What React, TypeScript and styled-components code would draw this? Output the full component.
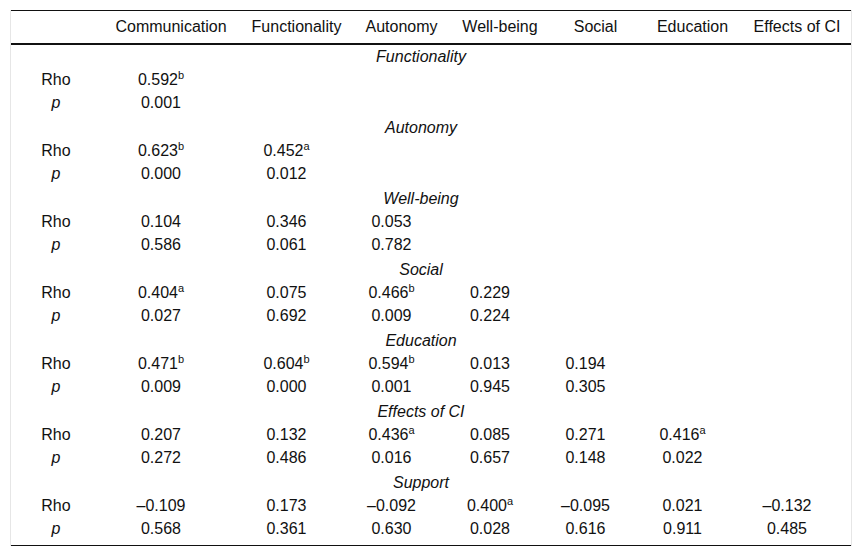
import React from "react";
import styled, { createGlobalStyle } from "styled-components";

const GlobalStyle = createGlobalStyle`
  html, body {
    margin: 0;
    padding: 0;
    background: #fff;
  }
  body {
    font-family: "Liberation Sans", Arial, Helvetica, sans-serif;
    color: #111;
  }
`;

const Wrapper = styled.div`
  margin: 10px 0 0 10px;
  width: 840px;
  border-left: 1px solid #e6e6e6;
  border-right: 1px solid #e6e6e6;
`;

const Table = styled.table`
  width: 840px;
  border-collapse: collapse;
  table-layout: fixed;
  font-size: 16px;
  border-top: 1px solid #111;
  border-bottom: 1px solid #111;

  tbody tr:last-child td {
    height: 28px;
  }
`;

const HeadCell = styled.th`
  font-weight: normal;
  text-align: center;
  height: 32px;
  padding: 0;
  white-space: nowrap;
  border-bottom: 2px solid #111;
`;

const Cell = styled.td<{ $tall?: boolean }>`
  text-align: center;
  padding: 0 20px 0 0;
  height: ${(p) => (p.$tall ? 25 : 23)}px;
  white-space: nowrap;
  vertical-align: ${(p) => (p.$tall ? "top" : "middle")};
  line-height: 23px;
`;

const Label = styled(Cell)<{ $italic?: boolean }>`
  padding-right: 0;
  font-style: ${(p) => (p.$italic ? "italic" : "normal")};
`;

const SectionCell = styled.td`
  text-align: center;
  font-style: italic;
  height: 23px;
  padding: 0 20px 0 0;
`;

const Sup = styled.sup`
  font-size: 11px;
  line-height: 0;
  vertical-align: 6px;
`;

const columns = [
  { name: "", width: 90 },
  { name: "Communication", width: 140 },
  { name: "Functionality", width: 111 },
  { name: "Autonomy", width: 99 },
  { name: "Well-being", width: 98 },
  { name: "Social", width: 93 },
  { name: "Education", width: 101 },
  { name: "Effects of CI", width: 108 },
];

type Group = { title: string; rho: string[]; p: string[] };

const groups: Group[] = [
  { title: "Functionality", rho: ["0.592b"], p: ["0.001"] },
  { title: "Autonomy", rho: ["0.623b", "0.452a"], p: ["0.000", "0.012"] },
  { title: "Well-being", rho: ["0.104", "0.346", "0.053"], p: ["0.586", "0.061", "0.782"] },
  {
    title: "Social",
    rho: ["0.404a", "0.075", "0.466b", "0.229"],
    p: ["0.027", "0.692", "0.009", "0.224"],
  },
  {
    title: "Education",
    rho: ["0.471b", "0.604b", "0.594b", "0.013", "0.194"],
    p: ["0.009", "0.000", "0.001", "0.945", "0.305"],
  },
  {
    title: "Effects of CI",
    rho: ["0.207", "0.132", "0.436a", "0.085", "0.271", "0.416a"],
    p: ["0.272", "0.486", "0.016", "0.657", "0.148", "0.022"],
  },
  {
    title: "Support",
    rho: ["\u20130.109", "0.173", "\u20130.092", "0.400a", "\u20130.095", "0.021", "\u20130.132"],
    p: ["0.568", "0.361", "0.630", "0.028", "0.616", "0.911", "0.485"],
  },
];

function Value({ v }: { v: string }) {
  const m = v.match(/^(.*?)([ab])$/);
  if (!m) return <>{v}</>;
  return (
    <>
      {m[1]}
      <Sup>{m[2]}</Sup>
    </>
  );
}

function pad(vals: string[]) {
  const out = [...vals];
  while (out.length < 7) out.push("");
  return out;
}

export default function App() {
  return (
    <>
      <GlobalStyle />
      <Wrapper>
        <Table>
          <colgroup>
            {columns.map((c, i) => (
              <col key={i} style={{ width: c.width }} />
            ))}
          </colgroup>
          <thead>
            <tr>
              {columns.map((c, i) => (
                <HeadCell key={i}>{c.name}</HeadCell>
              ))}
            </tr>
          </thead>
          <tbody>
            {groups.map((g) => (
              <React.Fragment key={g.title}>
                <tr>
                  <SectionCell colSpan={8}>{g.title}</SectionCell>
                </tr>
                <tr>
                  <Label>Rho</Label>
                  {pad(g.rho).map((v, i) => (
                    <Cell key={i}>
                      <Value v={v} />
                    </Cell>
                  ))}
                </tr>
                <tr>
                  <Label $italic $tall>
                    p
                  </Label>
                  {pad(g.p).map((v, i) => (
                    <Cell key={i} $tall>
                      {v}
                    </Cell>
                  ))}
                </tr>
              </React.Fragment>
            ))}
          </tbody>
        </Table>
      </Wrapper>
    </>
  );
}
